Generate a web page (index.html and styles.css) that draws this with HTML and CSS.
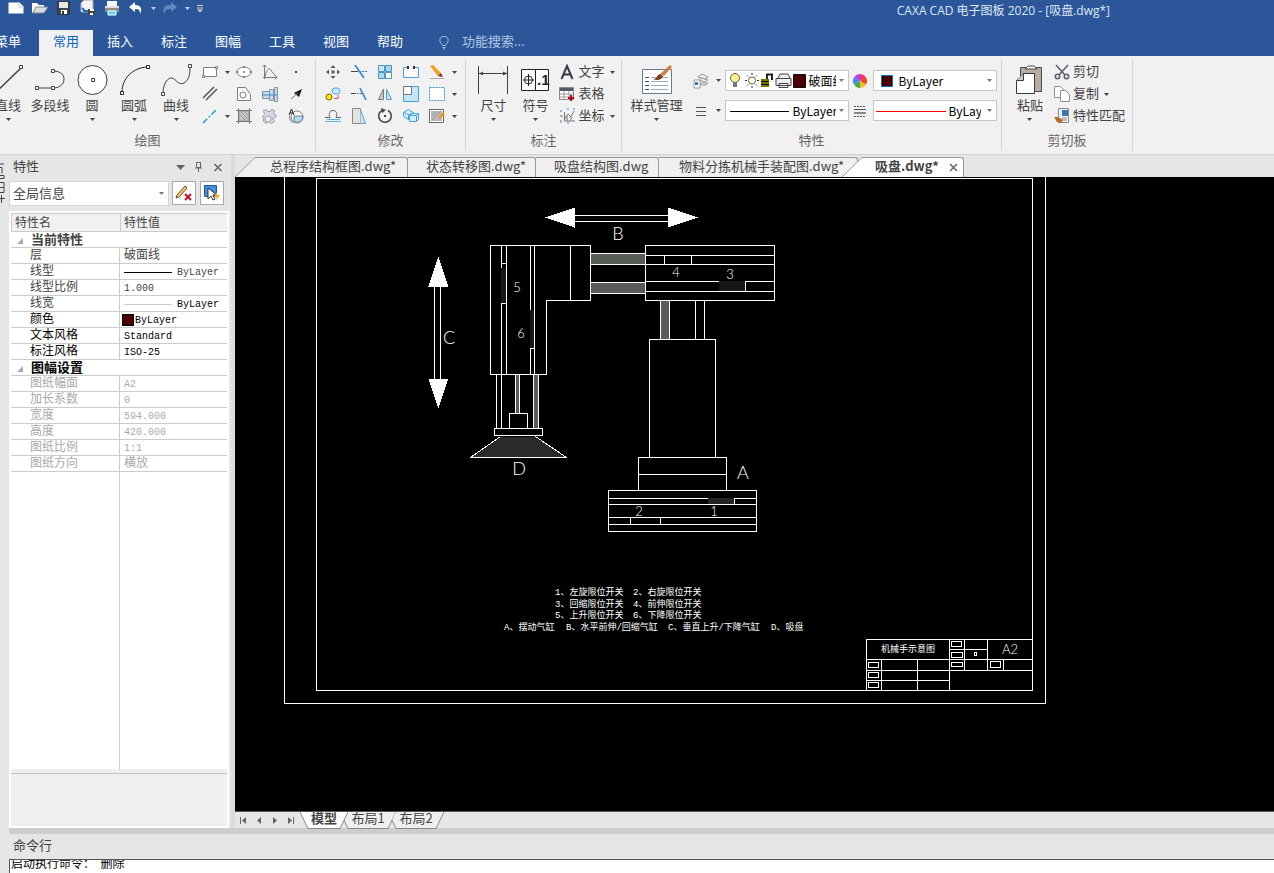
FILE: index.html
```html
<!doctype html>
<html lang="zh-CN">
<head>
  <meta charset="UTF-8">
  <meta name="viewport" content="width=device-width, initial-scale=1.0">
  <title>CAXA CAD 电子图板 2020</title>
  <link rel="stylesheet" href="styles.css">
</head>
<body>
  <svg class="defs" width="0" height="0" aria-hidden="true">
    <symbol id="caret" viewBox="0 0 5 3"><path d="M0 0h5L2.500 3z" fill="currentColor"/></symbol>
  </svg>

  <header class="titlebar">
    <div class="quick">
      <button aria-label="新建"><svg width="16" height="16"><path d="M.5 2.500h11l4 4v7H.5z" fill="#fff"/><path d="M11 2v5h5" fill="none" stroke="#b8c4d8"/></svg></button>
      <button aria-label="打开"><svg width="16" height="16"><path d="M0 13V3h5l2 2h5v3" fill="#fff"/><path d="M1 13l3-6h12l-4 6z" fill="#dcdcdc" stroke="#7f8794"/></svg></button>
      <button aria-label="保存"><svg width="16" height="16"><path d="M1.500 1.500h12v13h-12z" fill="#3f454f" stroke="#333"/><path d="M3 2h9v6H3z" fill="#e6e6e6"/><path d="M5 10h6v4H5z" fill="#fff"/><path d="M6 11h2v3H6z" fill="#333"/></svg></button>
      <button aria-label="另存为"><svg width="16" height="16"><path d="M4 0h9v12H1V3z" fill="#f3f3f3" stroke="#aaa"/><path d="M2 8l3 3h4M3 11h3" stroke="#2c6dc0" stroke-width="2" fill="none"/><path d="M8 9h7v6H8z" fill="#444"/><path d="M10 9h4v2h-4zM10 13h3v2h-3z" fill="#fff"/></svg></button>
      <button aria-label="打印"><svg width="16" height="16"><path d="M3 1h10v5H3z" fill="#fff"/><path d="M1 6h14v6H1z" fill="#8e8e8e"/><path d="M1 6h14v2H1z" fill="#ddd"/><path d="M4 11h8v4H4z" fill="#58d3f5" stroke="#fff"/></svg></button>
      <button aria-label="撤销"><svg width="16" height="16"><path d="M7 2L1 7l6 5V9c4 0 5 1 5 5 3-6 0-9-5-9z" fill="#fff"/></svg></button>
      <button class="drop" aria-label="撤销列表"><svg class="caret"><use href="#caret"/></svg></button>
      <button aria-label="恢复"><svg width="16" height="16"><path d="M9 2l6 5-6 5V9c-4 0-6 1-7 5C0 8 3 5 9 5z" fill="#6587c0"/></svg></button>
      <button class="drop" aria-label="恢复列表"><svg class="caret"><use href="#caret"/></svg></button>
      <button aria-label="自定义"><svg width="8" height="10"><path d="M1 2.500h6M1 5h6" stroke="#d8c9b4"/><path d="M1 6.500h6L4 9.500z" fill="#d8c9b4"/></svg></button>
    </div>
    <span class="app-title">CAXA CAD 电子图板 2020 - [吸盘.dwg*]</span>
  </header>

  <nav class="menu">
    <button class="first">菜单</button>
    <button class="active">常用</button>
    <button>插入</button>
    <button>标注</button>
    <button>图幅</button>
    <button>工具</button>
    <button>视图</button>
    <button>帮助</button>
    <label class="search">
      <svg width="10" height="14" fill="none" stroke="#a9bddd"><path d="M3.500 9.500C3 7.500.8 7 .8 4.500a4.200 4 0 0 1 8.400 0C9.200 7 7 7.500 6.500 9.500zM3.500 11.500h3M4 13h2"/></svg>
      <input type="text" placeholder="功能搜索..." aria-label="功能搜索">
    </label>
  </nav>

  <div class="ribbon">
    <section class="group draw">
      <div class="tools">
        <button class="big"><svg width="32" height="32" fill="none" stroke="#3b404a"><path d="M2 30L29 4" stroke-width="1.500"/><path d="M27.500 1.500h3v3h-3z" fill="#fff"/></svg>直线<svg class="caret"><use href="#caret"/></svg></button>
        <button class="big"><svg width="32" height="32" fill="none" stroke="#3b404a"><path d="M3 24h16M19 7c5 0 11 2 11 8s-5 9-11 9"/><path d="M1.500 22.500h3v3h-3zM17.500 22.500h3v3h-3zM17.500 5.500h3v3h-3z" fill="#fff"/></svg>多段线</button>
        <button class="big"><svg width="32" height="32" stroke="#3b404a"><circle cx="16.500" cy="16" r="14.500" fill="#fff"/><path d="M15.500 14.500h3v3h-3z" fill="#fff"/></svg>圆<svg class="caret"><use href="#caret"/></svg></button>
        <button class="big"><svg width="32" height="32" fill="none" stroke="#222"><path d="M4 28C4 15 14 4 29 3"/><path d="M2.500 27.500h3v3h-3zM28.500 1.500h3v3h-3z" fill="#fff"/></svg>圆弧<svg class="caret"><use href="#caret"/></svg></button>
        <button class="big"><svg width="32" height="32" fill="none" stroke="#3b404a"><path d="M3 29C3 20 8 13 12 14s7 8 12 5 6-8 6-16"/><path d="M1.500 28.500h3v3h-3zM28.500.5h3v3h-3z" fill="#fff"/></svg>曲线<svg class="caret"><use href="#caret"/></svg></button>
        <div class="grid draw-grid">
          <button aria-label="矩形"><svg width="16" height="16" fill="#fff" stroke="#7b7f87"><path d="M1.500 3.500h13v9h-13z"/><path d="M.5 11.500h2v2h-2zM13.500 2.500h2v2h-2z"/></svg><svg class="caret"><use href="#caret"/></svg></button>
          <button aria-label="椭圆"><svg width="16" height="16" fill="#fff" stroke="#7b7f87"><ellipse cx="8" cy="8" rx="7" ry="5"/><path d="M.5 7.500h1v1h-1zM14.500 7.500h1v1h-1zM7.500 2.500h1v1h-1zM7.500 12.500h1v1h-1zM7.500 7.500h1v1h-1z" stroke="#3b404a" stroke-width=".6"/></svg></button>
          <button aria-label="公式曲线"><svg width="16" height="16" fill="none" stroke="#777b83"><path d="M2.500 1v14M1 13.500h14M.5 3l2-2 2 2M13 11.500l2 2-2 2M3 13C5 3 8 3 10 8l4 4"/></svg></button>
          <button aria-label="点"><svg width="16" height="16"><path d="M7 7h2v2H7z" fill="#444"/></svg></button>
          <button aria-label="平行线"><svg width="16" height="16" stroke="#555"><path d="M1 12L12 1M4 14L15 3" stroke-width="1.500"/></svg></button>
          <button aria-label="轮廓"><svg width="16" height="16" fill="#f8f8f8" stroke="#7b7f87"><path d="M1.500 1.500h8l5 7v6h-13z"/><circle cx="7" cy="9" r="3"/></svg></button>
          <button aria-label="轴孔"><svg width="16" height="16" fill="#c8d9ec" stroke="#8494aa"><path d="M.5 5.500h7v7h-7zM7.500 3.500h4v11h-4zM12.500 1.500h3v14h-3z"/><path d="M0 9h15" stroke="#3a85d0"/></svg></button>
          <button aria-label="箭头"><svg width="16" height="16"><path d="M14 3L11 11 6 7z" fill="#111"/><path d="M3 13l7-6" stroke="#777"/></svg></button>
          <button aria-label="中心线"><svg width="16" height="16"><path d="M1 15L15 1" stroke="#1aa0dc" stroke-width="1.500" stroke-dasharray="6 2 2 2"/></svg><svg class="caret"><use href="#caret"/></svg></button>
          <button aria-label="剖面线"><svg width="16" height="16" fill="none" stroke="#999"><path d="M3 3h10v10H3z" fill="#c4c7cc"/><path d="M2.500 0v16M13.500 0v16M0 2.500h16M0 13.500h16" stroke="#777"/><path d="M3 6l7 7M4 3l9 9M8 3l5 5"/></svg></button>
          <button aria-label="齿轮"><svg width="16" height="16" fill="#d6d9e4" stroke="#9a9fb0"><path d="M1.500 2.500l3-1 1 2h3l1-2 3 1-1 3 3 2-1 2-3 1 2 3-3 2-3-2-2 2-3-2v-3l-1-2 2-2z"/><circle cx="6" cy="11" r="3" fill="#f1f1f1"/></svg></button>
          <button aria-label="局部放大"><svg width="16" height="16" fill="none" stroke="#7b7f87"><circle cx="9" cy="9" r="6" fill="#fff"/><path d="M6 8h9a5.500 5.500 0 0 1-9 5z" fill="#a9dcf5"/><path d="M1 7l2.500-6L6 7M2 5h3" stroke="#222"/><path d="M1.500 8c0 4 1 5 4 7"/></svg></button>
        </div>
      </div>
      <h2>绘图</h2>
    </section>

    <section class="group modify">
      <div class="tools">
        <div class="grid modify-grid">
          <button aria-label="平移"><svg width="16" height="16" fill="#555b66"><path d="M8 1l2.500 3h-5zM8 15l2.500-3h-5zM1 8l3-2.500v5zM15 8l-3-2.500v5zM6.500 6.500h3v3h-3z"/></svg></button>
          <button aria-label="裁剪"><svg width="16" height="16" stroke="#2f7fd0"><path d="M4 1l9 13" stroke-width="1.500"/><path d="M0 7.500h7" stroke="#444"/><path d="M8 7.500h8" stroke-dasharray="2 1"/></svg></button>
          <button aria-label="阵列"><svg width="16" height="16" stroke="#4f93bf"><path d="M1.500 1.500h6v6h-6z" fill="#c9e9fa"/><path d="M8.500 1.500h6v6h-6zM1.500 8.500h6v6h-6z" fill="#a5daf5"/><path d="M8.500 8.500h6v6h-6z" fill="#fff"/></svg></button>
          <button aria-label="打断"><svg width="16" height="16" fill="none" stroke="#4d9fd0"><path d="M5 3.500H.5v10h15v-10H11" fill="#fafafa"/><path d="M4 2h2v3H4zM10 2h2v3h-2z" fill="#333" stroke="none"/></svg></button>
          <button aria-label="编辑"><svg width="16" height="16"><path d="M1 2l3-1 8 8-3 3z" fill="#f0a020"/><path d="M9 12l3-3 2 4z" fill="#733"/><path d="M1 14.500h14" stroke="#aaa"/></svg><svg class="caret"><use href="#caret"/></svg></button>
          <button aria-label="复制"><svg width="16" height="16"><rect x="7" y="2" width="8" height="6" rx="3" fill="#c9e9fa" stroke="#5da6d8"/><circle cx="4" cy="11" r="3" fill="#ffe400" stroke="#776a00"/><path d="M9 12.500h4V9" stroke="#b55" fill="none"/></svg></button>
          <button aria-label="延伸"><svg width="16" height="16" stroke="#2f7fd0"><path d="M9 2l6 12" stroke-width="1.500"/><path d="M0 7.500h5" stroke="#444"/><path d="M6 7.500h6" stroke-dasharray="2 1"/></svg></button>
          <button aria-label="镜像"><svg width="16" height="16"><path d="M6.500 3v10.500h-5z" fill="#ccc" stroke="#777"/><path d="M9.500 3v10.500h5z" fill="#b8e2f8" stroke="#5f9ec4"/></svg></button>
          <button aria-label="缩放"><svg width="16" height="16"><path d="M.5.5h15v15H.5z" fill="#c3e6f8" stroke="#4d9fd0"/><path d="M.5.5h8v8h-8z" fill="#fff" stroke="#777"/></svg></button>
          <button aria-label="拉伸"><svg width="16" height="16"><path d="M.5 1.500h15v13H.5z" fill="#fff" stroke="#3f8fc8" stroke-dasharray="2 1"/></svg><svg class="caret"><use href="#caret"/></svg></button>
          <button aria-label="等距线"><svg width="16" height="16" fill="none" stroke="#666"><path d="M0 9.500h5c-2-4 0-7 3-7s5 3 3 7h5"/><path d="M0 13.500h16M2 11.500h13" stroke="#62b0dc"/></svg></button>
          <button aria-label="拔模"><svg width="16" height="16"><path d="M1.500.5h8v15h-8z" fill="#e2e2e2" stroke="#888"/><path d="M9.500 1.500l5 14h-5" fill="#c9e9fa" stroke="#5aa3d0"/></svg></button>
          <button aria-label="旋转"><svg width="16" height="16"><path d="M5 2.500a6.300 6.300 0 1 0 6 0" fill="none" stroke="#444" stroke-width="1.500"/><path d="M4 0l5 2-4 3z" fill="#444"/><path d="M7 7h2v2H7z" fill="#444"/></svg></button>
          <button aria-label="块"><svg width="16" height="16" fill="#cdebfa" stroke="#4fa3d4"><path d="M.5 4.500l5-3 5 3v6l-5 1-5-3zM.5 4.500l5 2 5-2M5.500 6.500v5"/><path d="M6.500 7.500l3-2h6v6l-2 2h-7zM6.500 7.500h7v6M13.500 7.500l2-2"/></svg></button>
          <button aria-label="填充编辑"><svg width="16" height="16"><path d="M.5 1.500h14v13H.5z" fill="#fff" stroke="#666"/><path d="M2 3h11v10H2z" fill="#b8b8b8"/><path d="M3 12l9-9M3 8l5-5" stroke="#999"/><path d="M9 10l5-6 2 2-5 5z" fill="#e89a20"/></svg><svg class="caret"><use href="#caret"/></svg></button>
        </div>
      </div>
      <h2>修改</h2>
    </section>

    <section class="group annotate">
      <div class="tools">
        <button class="big"><svg width="32" height="32" fill="#3b404a" stroke="#3b404a"><path d="M1.500 2v28M30.500 2v28M2 9.500h28" /><path d="M2 9.500l4-2v4zM30 9.500l-4-2v4z" stroke="none"/></svg>尺寸<svg class="caret"><use href="#caret"/></svg></button>
        <button class="big"><svg width="32" height="32" fill="none" stroke="#222"><path d="M2.500 5.500h27v21h-27zM16.500 5.500v21" fill="#fff"/><circle cx="9.500" cy="16" r="4"/><path d="M4 16h11M9.500 10v12"/><text x="18" y="21" class="tol">.1</text></svg>符号<svg class="caret"><use href="#caret"/></svg></button>
        <div class="rows">
          <button><svg width="16" height="16" fill="none" stroke="#333a46" stroke-width="2"><path d="M2.500 15L8 2l5.500 13M4.500 10.500h7"/></svg><span>文字</span><svg class="caret"><use href="#caret"/></svg></button>
          <button><svg width="16" height="16"><path d="M.5 1.500h14v12H.5z" fill="#fff" stroke="#888"/><path d="M1 2h13v3H1z" fill="#555b66"/><path d="M1 8h13M1 11h13M5 5v8M10 5v8" stroke="#999"/><path d="M9 12h6M12 9v6" stroke="#c00020" stroke-width="2"/></svg><span>表格</span></button>
          <button><svg width="16" height="16" fill="none" stroke="#777"><path d="M5.500 4v9H16M5 12l4-6 3 3 3-6M8 13V8M12 13V9"/><path d="M2 2v2M1 8h3M2 12v3M8 1h2M14 1h2M8 15h2" stroke="#3a85d0"/></svg><span>坐标</span><svg class="caret"><use href="#caret"/></svg></button>
        </div>
      </div>
      <h2>标注</h2>
    </section>

    <section class="group props">
      <div class="tools">
        <button class="big wide"><svg width="32" height="32"><path d="M1.500 5.500h29v24h-29z" fill="#fff" stroke="#6b7b90"/><path d="M4 13.500h4M4 17.500h4M4 21.500h4M4 25.500h4" stroke="#39536f"/><path d="M10 13.500h17M10 17.500h17M10 21.500h17M10 25.500h17" stroke="#9ba9c4"/><path d="M12 15c5 0 3-4 7-5l3 2c-1 4-6 5-10 3z" fill="#7a4218"/><path d="M19 10l10-9 2 2-8 9z" fill="#cf8240"/></svg>样式管理<svg class="caret"><use href="#caret"/></svg></button>
        <div class="prop-rows">
          <div class="prop-row">
            <button class="mini" aria-label="图层"><svg width="16" height="16" fill="#eee" stroke="#999"><path d="M5 4l4-3 6 3-3 2zM6 7l3-2 6 2-3 2zM7 10h8l-2 2H8z"/><path d="M1 7h6v8H1z" fill="#fff"/><path d="M2 9h3v3H2z" fill="#3e78b8" stroke="none"/></svg><svg class="caret"><use href="#caret"/></svg></button>
            <div class="combo">
              <svg width="78" height="18">
                <circle cx="7" cy="6" r="4.500" fill="#ffee9c" stroke="#6b5a20"/><path d="M5 10h4v5H5z" fill="#777"/>
                <g stroke="#222" fill="none"><circle cx="24" cy="8.500" r="3.500" stroke="#7a5c28"/><path d="M24 1v2M24 14v2M17 8.500h2M29 8.500h2M19 3.500l1 1M28 12.500l1 1M29 3.500l-1 1M19 13.500l1-1"/></g>
                <path d="M33 7h8v8h-8z" fill="#777300"/><path d="M33 9.500h8M33 12.500h8" stroke="#111"/><path d="M39 7V2.500h5V8" fill="none" stroke="#222" stroke-width="2"/>
                <g fill="#eee" stroke="#444"><path d="M50 6l2-4h8l2 4M48 6.500h15v7H48zM51 11.500h9v4h-9z"/></g>
                <path d="M65.500 2.500h12v13h-12z" fill="#4a0000" stroke="#111"/>
              </svg>
              <select aria-label="当前图层"><option>破面线</option></select>
              <svg class="caret"><use href="#caret"/></svg>
            </div>
            <svg width="14" height="14" viewBox="-7 -7 14 14"><path d="M0 0V-7A7 7 0 0 1 6-3.500z" fill="#f03860"/><path d="M0 0L6-3.500A7 7 0 0 1 6 3.500z" fill="#f04020"/><path d="M0 0L6 3.500A7 7 0 0 1 0 7z" fill="#f5c020"/><path d="M0 0V7A7 7 0 0 1-6 3.500z" fill="#40b040"/><path d="M0 0L-6 3.500A7 7 0 0 1-6-3.500z" fill="#3c88f0"/><path d="M0 0L-6-3.500A7 7 0 0 1 0-7z" fill="#b048e8"/></svg>
            <div class="combo">
              <svg width="18" height="14"><path d="M5.500 1.500h11v11h-11z" fill="#4a0000" stroke="#0a70d0"/></svg>
              <select class="spaced" aria-label="颜色"><option>ByLayer</option></select>
              <svg class="caret"><use href="#caret"/></svg>
            </div>
          </div>
          <div class="prop-row">
            <button class="mini" aria-label="线宽显示"><svg width="16" height="16"><path d="M3 4.500h10M3 8.500h10M3 12.500h10" stroke="#555"/></svg><svg class="caret"><use href="#caret"/></svg></button>
            <div class="combo">
              <svg width="62" height="14"><path d="M2 7.500h59" stroke="#000"/></svg>
              <select aria-label="线型"><option>ByLayer</option></select>
              <svg class="caret"><use href="#caret"/></svg>
            </div>
            <svg width="14" height="14"><path d="M1 2.500h12M1 12.500h12" stroke="#555" stroke-dasharray="2 1"/><path d="M1 5.500h12" stroke="#555"/><path d="M1 9h12" stroke="#888" stroke-width="2"/></svg>
            <div class="combo">
              <svg width="70" height="14"><path d="M0 7.500h70" stroke="#f00"/></svg>
              <select class="narrow" aria-label="线宽"><option>ByLayer</option></select>
              <svg class="caret"><use href="#caret"/></svg>
            </div>
          </div>
        </div>
      </div>
      <h2>特性</h2>
    </section>

    <section class="group clip">
      <div class="tools">
        <button class="big"><svg width="32" height="32"><path d="M6.500 3.500h21v24h-21z" fill="#b8aca2" stroke="#4a4a4a"/><path d="M11 5l3-3h6l3 3z" fill="#fff" stroke="#444"/><path d="M9.500 9.500h11v20h-18v-13z" fill="#fff" stroke="#333a46"/><path d="M2.500 16.500h7v-7" fill="#c5c9d3" stroke="#333a46"/></svg>粘贴<svg class="caret"><use href="#caret"/></svg></button>
        <div class="rows">
          <button><svg width="16" height="16" fill="none" stroke="#59606c" stroke-width="1.500"><path d="M2 1l9 10M14 1L5 11"/><circle cx="3.500" cy="12.500" r="2.200"/><circle cx="12.500" cy="12.500" r="2.200"/></svg><span>剪切</span></button>
          <button><svg width="16" height="16" fill="#fff" stroke="#8a8f99"><path d="M.5.5h6l3 3v8h-9z"/><path d="M6.500 4.500h5l4 4v7h-9z"/></svg><span>复制</span><svg class="caret"><use href="#caret"/></svg></button>
          <button><svg width="16" height="16"><path d="M4.500.5h10v14h-10z" fill="#eef3f8" stroke="#888"/><path d="M8 2h6v6H8z" fill="#3d76b4"/><path d="M8 10h5M8 12h5" stroke="#888"/><path d="M0 9h4l5 3-2 3-4-1z" fill="#b86a2c"/></svg><span>特性匹配</span></button>
        </div>
      </div>
      <h2>剪切板</h2>
    </section>
  </div>

  <main>
    <aside class="strip"><svg width="5" height="42" fill="none" stroke="#444"><path d="M0 2h4M0 5.500h2v6M0 13.500h4v3H0M0 20.500h4v10H0M0 25.500h4M0 36.500h5M1.500 33v8"/></svg></aside>

    <aside class="panel">
      <div class="panel-title">
        <span>特性</span>
        <button aria-label="菜单"><svg width="10" height="10"><path d="M1 3h9L5.500 8z" fill="#666"/></svg></button>
        <button aria-label="固定"><svg width="10" height="10" fill="none" stroke="#666"><path d="M2.500.5h4v5h-4zM1 6h7M4.500 6v4M6.500 0v6"/></svg></button>
        <button aria-label="关闭"><svg width="10" height="10" stroke="#666" stroke-width="1.500"><path d="M1.500 2l7 7M8.500 2l-7 7"/></svg></button>
      </div>
      <div class="panel-bar">
        <div class="combo">
          <select aria-label="对象"><option>全局信息</option></select>
          <svg class="caret"><use href="#caret"/></svg>
        </div>
        <button aria-label="清除"><svg width="18" height="18"><path d="M2 11l8-9 2 2-8 9-3 1z" fill="#f6c96a" stroke="#6a4a14"/><path d="M10 10l6 6M16 10l-6 6" stroke="#c8102a" stroke-width="2"/></svg></button>
        <button aria-label="快速选择"><svg width="18" height="18"><path d="M1.500 1.500h12v11h-12z" fill="#3e8fdc" stroke="#235a96"/><path d="M5 4v11l3-3 2 4 2-1-2-4h4z" fill="#fff" stroke="#333"/><path d="M14 8l-3 5h3l-1 4 4-6h-3z" fill="#f5a623"/></svg></button>
      </div>
      <div class="sheet">
        <div class="table-wrap">
          <table>
            <thead><tr><th>特性名</th><th>特性值</th></tr></thead>
            <tbody>
              <tr class="section"><td colspan="2"><svg width="6" height="6"><path d="M6 0v6H0z" fill="#aaa"/></svg>当前特性</td></tr>
              <tr><td>层</td><td>破面线</td></tr>
              <tr><td>线型</td><td class="latin"><div class="value"><svg width="48" height="8"><path d="M0 4.500h48" stroke="#000"/></svg>ByLayer</div></td></tr>
              <tr><td>线型比例</td><td class="latin">1.000</td></tr>
              <tr><td>线宽</td><td class="latin black"><div class="value"><svg width="48" height="8"><path d="M0 4.500h48" stroke="#ccc"/></svg>ByLayer</div></td></tr>
              <tr class="black"><td>颜色</td><td class="latin"><div class="value swatch"><i></i>ByLayer</div></td></tr>
              <tr class="black"><td>文本风格</td><td class="latin">Standard</td></tr>
              <tr class="black"><td>标注风格</td><td class="latin">ISO-25</td></tr>
              <tr class="section black"><td colspan="2"><svg width="6" height="6"><path d="M6 0v6H0z" fill="#aaa"/></svg>图幅设置</td></tr>
              <tr class="off"><td>图纸幅面</td><td class="latin">A2</td></tr>
              <tr class="off"><td>加长系数</td><td class="latin">0</td></tr>
              <tr class="off"><td>宽度</td><td class="latin">594.000</td></tr>
              <tr class="off"><td>高度</td><td class="latin">420.000</td></tr>
              <tr class="off"><td>图纸比例</td><td class="latin">1:1</td></tr>
              <tr class="off"><td>图纸方向</td><td>横放</td></tr>
            </tbody>
          </table>
        </div>
        <div class="hint"></div>
      </div>
    </aside>

    <section class="workspace">
      <div class="doc-tabs">
        <svg class="slant" width="21" height="22"><path d="M0 22L20 2.500h1V22z" fill="#f0f0f0"/><path d="M0 22L20 2.500h1" fill="none" stroke="#999"/></svg>
        <button class="after-slant t1">总程序结构框图.dwg*</button>
        <button class="t2">状态转移图.dwg*</button>
        <button class="t3">吸盘结构图.dwg</button>
        <button class="t4">物料分拣机械手装配图.dwg*</button>
        <svg class="slant over" width="21" height="22"><path d="M0 22L20 2.500h1V22z" fill="#fff"/><path d="M0 22L20 2.500h1" fill="none" stroke="#999"/></svg>
        <button class="after-slant active">吸盘.dwg*<svg width="9" height="9" stroke="#666" stroke-width="1.500"><path d="M1 1l7 7M8 1L1 8"/></svg></button>
      </div>

      <div class="canvas">
        <svg class="drawing" width="100%" height="100%" shape-rendering="crispEdges">
          <!-- model coordinates: window pixels, shifted by half a pixel for sharp lines -->
          <g transform="translate(-234.500 -176.500)" fill="none" stroke="#fff">
            <!-- sheet frames -->
            <path d="M284 170V703H1045V170"/>
            <path d="M316 178H1032V690H316z"/>

            <!-- direction arrows -->
            <path d="M574 215H667M574 221H667M434 286V378M440 286V378"/>
            <path d="M545 217L574 207V227zM697 217L667 207V227zM438 256L428 286H448zM438 408L428 378H448z" fill="#fff" stroke="none"/>

            <!-- vertical lift -->
            <path d="M490 245H590V300H546V374H490zM570 245V300M501 245V374M506 245V374M530 245V374M534 245V374M501 263H506M501 303H506M530 348H534"/>
            <path d="M501 268h4v34h-4zM530 310h3v37h-3z" fill="#171717" stroke="#171717"/>

            <!-- horizontal arm -->
            <path d="M590 253H645V264H590zM590 282H645V293H590z" fill="#585d57"/>
            <path d="M645 245H774V300H645zM645 255H774M645 264H774M645 281H774M645 291H774M664 255V264M691 255V264"/>
            <path d="M719 281h25v9h-25z" fill="#171717" stroke="#171717"/>
            <path d="M745 281V291"/>

            <!-- column and base -->
            <path d="M660 300H669V339H660z" fill="#585d57"/>
            <path d="M695 300V339M704 300V339M649 339H715V457H649zM638 457H726V490H638zM638 474H726"/>
            <path d="M608 490H756V531H608zM608 498H756M608 504H756M608 517H756M608 524H756M630 517V524M660 517V524"/>
            <path d="M708 498h25v5h-25z" fill="#242424" stroke="#242424"/>
            <path d="M734 498V504"/>

            <!-- suction cup -->
            <path d="M496 374V428M501 374V428M509 413H527V428H509zM494 428H542V435H494z"/>
            <path d="M515 374H519V413H515zM533 374H538V428H533z" fill="#585d57"/>
            <path d="M500 436H535L566 457H470z" fill="#2a2a2a" stroke="none"/>
            <path d="M500 436L470 457H566L535 436"/>

            <!-- title block -->
            <path d="M866 690V639H1032M949 639V690M964 639V670M987 639V670M866 659H1032M949 649H987M866 670H1032M866 680H949M881 659V690M917 659V690M1003 659V670"/>
            <path d="M868 662h10v5h-10zM868 672h10v5h-10zM868 682h10v5h-10zM951 641h10v5h-10zM951 652h11v5h-11zM951 662h11v4h-11zM990 661h10v6h-10zM974 652h2v3h-2z"/>
          </g>
          <g transform="translate(-235 -177)" class="marks">
            <text x="618" y="240">B</text>
            <text x="449" y="344">C</text>
            <text x="519" y="475">D</text>
            <text x="743" y="479">A</text>
            <g class="num">
              <text x="517" y="292">5</text>
              <text x="521" y="338">6</text>
              <text x="676" y="277">4</text>
              <text x="730" y="279">3</text>
              <text x="639" y="516">2</text>
              <text x="714" y="516">1</text>
              <text x="1010" y="654">A2</text>
            </g>
          </g>
          <g transform="translate(-235 -177)" class="notes">
            <text x="555" y="595">1、左旋限位开关</text><text x="633" y="595">2、右旋限位开关</text>
            <text x="555" y="607">3、回缩限位开关</text><text x="633" y="607">4、前伸限位开关</text>
            <text x="555" y="618">5、上升限位开关</text><text x="633" y="618">6、下降限位开关</text>
            <text x="504" y="630">A、摆动气缸</text><text x="566" y="630">B、水平前伸/回缩气缸</text><text x="668" y="630">C、垂直上升/下降气缸</text><text x="771" y="630">D、吸盘</text>
            <text x="881" y="652">机械手示意图</text>
          </g>
        </svg>
      </div>

      <div class="layout-tabs">
        <button class="step" aria-label="第一个"><svg width="8" height="7" fill="#666"><path d="M1 0h1v7H1zM7 0v7L3 3.500z"/></svg></button>
        <button class="step" aria-label="上一个"><svg width="8" height="7" fill="#666"><path d="M6 0v7L2 3.500z"/></svg></button>
        <button class="step" aria-label="下一个"><svg width="8" height="7" fill="#666"><path d="M2 0v7l4-3.500z"/></svg></button>
        <button class="step" aria-label="最后一个"><svg width="8" height="7" fill="#666"><path d="M6 0h1v7H6zM1 0v7l4-3.500z"/></svg></button>
        <button class="sheet-tab active"><svg width="48" height="17"><path d="M0 0l8 16.500h32L48 0" fill="#fff" stroke="#888"/></svg><span>模型</span></button>
        <button class="sheet-tab"><svg width="56" height="17"><path d="M4 8l4 8.500h40L56 0H8z" fill="#efefef"/><path d="M4 8l4 8.500h40L56 0" fill="none" stroke="#888"/></svg><span>布局1</span></button>
        <button class="sheet-tab"><svg width="56" height="17"><path d="M4 8l4 8.500h40L56 0H8z" fill="#efefef"/><path d="M4 8l4 8.500h40L56 0" fill="none" stroke="#888"/></svg><span>布局2</span></button>
      </div>
    </section>
  </main>

  <footer class="command">
    <h2>命令行</h2>
    <div class="log">
      <p>启动执行命令： &nbsp;删除</p>
      <p>命令:</p>
    </div>
  </footer>
</body>
</html>
```

FILE: styles.css
```css
* {
  box-sizing: border-box;
}
body {
  margin: 0;
  height: 100vh;
  display: flex;
  flex-direction: column;
  overflow: hidden;
  background: #e6e6e6;
  color: #444;
  font: 13px/16px "Noto Sans CJK SC", sans-serif;
}
button, select, input {
  font: inherit;
  color: inherit;
  border: none;
  background: none;
  padding: 0;
  margin: 0;
}
h2 {
  margin: 0;
  font-size: 13px;
  font-weight: normal;
}
svg {
  display: block;
  flex: none;
}
.defs {
  position: absolute;
}
.caret {
  width: 5px;
  height: 3px;
  color: #444;
}

/* title bar */
.titlebar {
  flex: none;
  height: 22px;
  background: #2b579a;
  color: #dfe6f2;
  display: flex;
  align-items: flex-start;
  white-space: nowrap;
}
.quick {
  display: flex;
  align-items: center;
  gap: 8px;
  height: 16px;
  padding-left: 8px;
}
.quick .drop {
  margin: 0 -2px 0 -1px;
}
.quick .caret {
  color: #c8d2e4;
}
.app-title {
  margin-left: auto;
  margin-right: 164px;
  font: 12px/21px "Open Sans", "Noto Sans CJK SC", sans-serif;
}

/* menu */
.menu {
  flex: none;
  height: 34px;
  background: #2b579a;
  color: #fff;
  display: flex;
  align-items: flex-end;
  padding-left: 39px;
}
.menu button {
  width: 54px;
  height: 26px;
  padding-bottom: 4px;
  white-space: nowrap;
}
.menu .first {
  width: 46px;
  margin-left: -54px;
  margin-right: 8px;
}
.menu .active {
  background: #f1f1f1;
  color: #0a62c4;
}
.search {
  display: flex;
  align-items: center;
  gap: 13px;
  height: 26px;
  padding-left: 22px;
}
.search input {
  width: 90px;
  padding-bottom: 4px;
}
.search input::placeholder {
  color: #b5c6e2;
}

/* ribbon */
.ribbon {
  flex: none;
  display: flex;
  height: 99px;
  background: #f1f1f1;
  border-bottom: 1px solid #d2d2d2;
}
.group {
  flex: none;
  display: flex;
  flex-direction: column;
  align-items: center;
  padding: 5px 0 0;
  margin: 3px 0;
  border-right: 1px solid #d4d4d4;
}
.group h2 {
  margin-top: auto;
  line-height: 22px;
  color: #666;
}
.tools {
  display: flex;
  margin-top: -3px;
}
.draw {
  width: 316px;
}
.draw .tools {
  align-self: flex-start;
  margin-left: -13px;
}
.draw h2 {
  padding-right: 20px;
}
.modify {
  width: 150px;
}
.annotate {
  width: 156px;
}
.props {
  width: 380px;
}
.clip {
  width: 131px;
}
.big {
  width: 42px;
  height: 66px;
  padding-top: 3px;
  display: flex;
  flex-direction: column;
  align-items: center;
  gap: 1px;
  white-space: nowrap;
}
.wide {
  width: 60px;
}
.big .caret {
  margin-top: 4px;
}
.tol {
  font: bold 15px "Liberation Sans", sans-serif;
  fill: #222;
  stroke: none;
}
.grid {
  display: grid;
  grid-auto-rows: 22px;
}
.grid button {
  display: flex;
  align-items: center;
  justify-content: flex-start;
  gap: 7px;
  padding-left: 5px;
}
.draw-grid {
  grid-template-columns: 34px 26px 26px 26px;
}
.modify-grid {
  grid-template-columns: 26px 26px 26px 26px 38px;
}
.rows {
  display: grid;
  grid-auto-rows: 22px;
  margin-left: 3px;
}
.rows button {
  display: flex;
  align-items: center;
  gap: 3px;
  white-space: nowrap;
}
.rows span {
  padding-bottom: 2px;
}
.rows .caret {
  margin-left: 2px;
}
.prop-rows {
  display: grid;
  align-content: start;
  gap: 9px;
  padding-top: 9px;
  margin-left: 6px;
}
.prop-row {
  display: flex;
  align-items: center;
  gap: 4px;
}
.mini {
  display: flex;
  align-items: center;
  gap: 7px;
}
.combo {
  display: flex;
  align-items: center;
  width: 124px;
  height: 21px;
  padding: 0 4px 0 2px;
  background: #fff;
  border: 1px solid #c6c6c6;
}
.prop-row > svg {
  margin-right: 2px;
}
.combo select {
  appearance: none;
  flex: 1;
  min-width: 0;
  margin: 0 3px;
  overflow: hidden;
  text-overflow: clip;
  font-size: 12px;
  color: #000;
}
.combo .spaced {
  margin-left: 5px;
}
.combo .narrow {
  margin-right: 6px;
}
.combo .caret {
  color: #777;
  pointer-events: none;
}

/* property panel */
main {
  flex: 1;
  min-height: 0;
  display: flex;
}
.strip {
  flex: none;
  width: 9px;
  padding-top: 7px;
}
.panel {
  flex: none;
  width: 220px;
  display: flex;
  flex-direction: column;
}
.panel-title {
  display: flex;
  align-items: center;
  gap: 9px;
  height: 24px;
  padding: 0 6px 0 4px;
}
.panel-title span {
  margin-right: auto;
  padding-bottom: 3px;
}
.panel-bar {
  display: flex;
  gap: 3px;
  margin-top: 2px;
  padding-right: 5px;
}
.panel-bar .combo {
  width: 160px;
  height: 25px;
  border-color: #d5d5d5;
}
.panel-bar select {
  margin-left: 1px;
  padding-bottom: 2px;
  font-size: 13px;
  color: #444;
}
.panel-bar button {
  width: 24px;
  height: 24px;
  display: grid;
  place-items: center;
  background: #fff;
  border: 1px solid #aaa;
}
.panel-bar button + button {
  margin-left: 1px;
}
.sheet {
  flex: 1;
  display: flex;
  flex-direction: column;
  margin-top: 5px;
  border: 2px solid #fff;
  background: #efefef;
}
.table-wrap {
  flex: 1;
  background: linear-gradient(#ccc, #ccc) 108px 0 / 1px 100% no-repeat #fff;
}
table {
  width: 100%;
  table-layout: fixed;
  border-collapse: separate;
  border-spacing: 0;
  font: 12px/13px "Liberation Mono", "Noto Sans CJK SC", monospace;
}
th, td {
  height: 16px;
  padding: 2px 0 0 4px;
  border-bottom: 1px solid #ccc;
  text-align: left;
  font-weight: normal;
  white-space: nowrap;
}
th {
  height: 19px;
  border: 1px solid #ccc;
  border-width: 1px 0 1px 1px;
  background: #f1f1f1;
  padding: 3px 0 0 3px;
}
th:first-child {
  width: 109px;
}
td:first-child {
  padding-left: 19px;
  border-right: 1px solid #ccc;
}
.section td:first-child {
  padding: 1px 0 0 6px;
  border-right: none;
  background: #fff;
  font-size: 13px;
  font-weight: bold;
}
.section svg {
  display: inline-block;
  margin-right: 8px;
}
.latin {
  padding-top: 1px;
  font-size: 10px;
}
.value {
  display: flex;
  align-items: center;
  gap: 5px;
}
.swatch {
  gap: 1px;
  margin-left: -2px;
}
.swatch i {
  width: 12px;
  height: 12px;
  background: #4a0000;
  border: 1px solid #000;
}
.black {
  color: #000;
}
.off {
  color: #aaa;
}
.hint {
  height: 53px;
  margin-top: 4px;
  border-top: 1px solid #c4c4c4;
}

/* documents */
.workspace {
  flex: 1;
  min-width: 0;
  margin-left: 2px;
  border-left: 4px solid #dcdcdc;
  display: flex;
  flex-direction: column;
}
.doc-tabs {
  flex: none;
  display: flex;
  align-items: flex-end;
  height: 22px;
}
.doc-tabs button {
  height: 20px;
  padding: 0 12px 3px 18px;
  background: #f0f0f0;
  border: 1px solid #999;
  border-width: 1px 1px 0 0;
  border-radius: 0 3px 0 0;
  line-height: 16px;
  white-space: nowrap;
  text-align: left;
}
.doc-tabs .t1 {
  width: 152px;
}
.doc-tabs .t2 {
  width: 128px;
}
.doc-tabs .t3 {
  width: 123px;
}
.doc-tabs .t4 {
  width: 199px;
  padding-left: 20px;
}
.doc-tabs .after-slant {
  padding-left: 14px;
}
.over {
  margin-left: -16px;
}
.doc-tabs .active {
  display: flex;
  align-items: center;
  justify-content: space-between;
  width: 101px;
  padding-right: 5px;
  padding-left: 12px;
  background: #fff;
  font-weight: bold;
}
.active svg {
  margin-top: 2px;
}
.canvas {
  flex: 1;
  min-height: 0;
  background: #000;
}
.marks {
  fill: #fff;
  font: 300 18px "Lato", sans-serif;
  text-anchor: middle;
}
.num {
  font-size: 13px;
}
.notes {
  fill: #fff;
  font: 9px "Liberation Mono", "Noto Sans CJK SC", monospace;
}
.layout-tabs {
  flex: none;
  display: flex;
  align-items: flex-start;
  height: 17px;
  border-top: 1px solid #555;
}
.step {
  width: 16px;
  height: 17px;
  display: grid;
  place-items: center;
}
.sheet-tab {
  position: relative;
  margin-left: -8px;
  white-space: nowrap;
}
.sheet-tab svg {
  margin: 0;
}
.sheet-tab span {
  position: absolute;
  inset: 0;
  line-height: 12px;
}
.sheet-tab.active {
  z-index: 2;
  margin-left: 1px;
  font-weight: bold;
}

/* command line */
.command {
  flex: none;
  height: 45px;
  margin-left: 9px;
  border-top: 6px solid #cdcdcd;
}
.command h2 {
  padding-left: 4px;
  line-height: 21px;
  height: 25px;
}
.log {
  height: 14px;
  padding: 0 1px;
  border: 1px solid #555;
  border-width: 1px 0 0 1px;
  background: #fff;
  overflow: hidden;
  color: #000;
  font: 12px/16px "Noto Sans CJK SC", sans-serif;
}
.log p {
  margin: 0;
}
.log p:first-child {
  margin-top: -5px;
}
```
